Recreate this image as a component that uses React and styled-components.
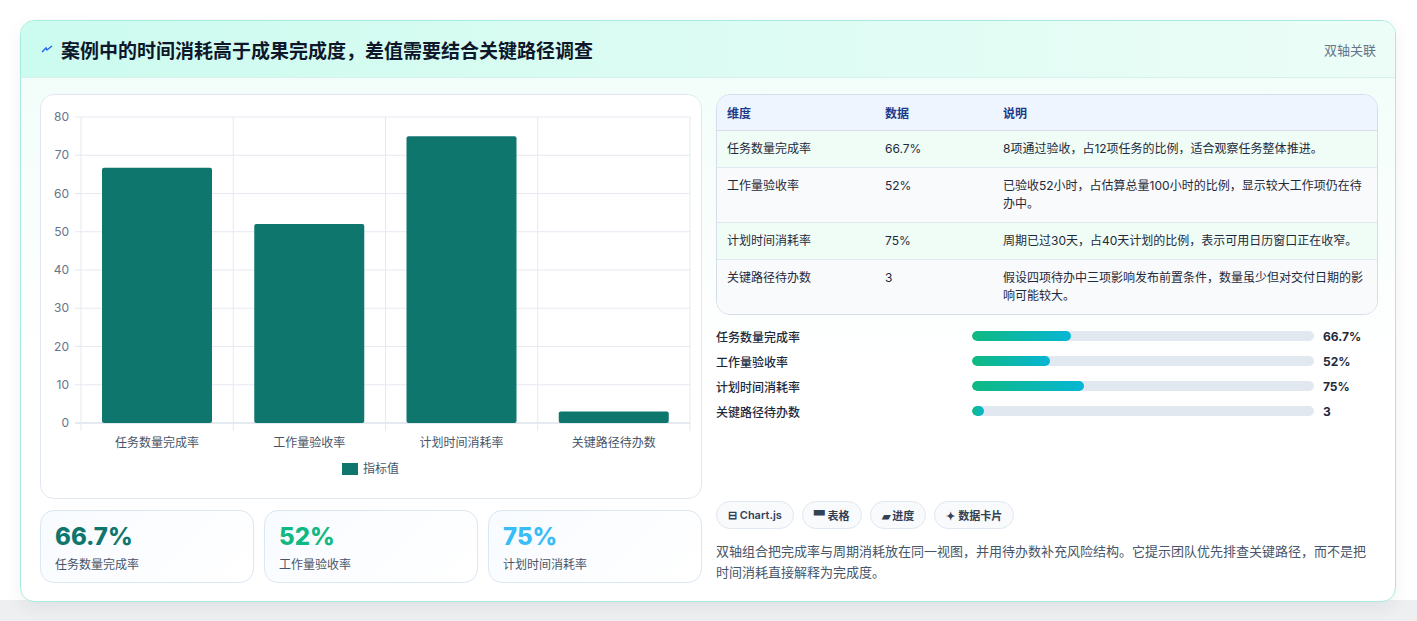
import React from 'react';
import styled, { createGlobalStyle } from 'styled-components';

const Global = createGlobalStyle`
  body { margin: 0; background: #f3f4f6; font-family: Inter, "Noto Sans CJK SC", sans-serif; }
`;

const Page = styled.div`
  padding: 20px 21px 21px 20px;
  height: 621px;
  box-sizing: border-box;
  background: linear-gradient(#fff 0, #fff 600px, #eeeff1 600px);
`;

const Card = styled.div`
  border: 1px solid #a7eadf;
  border-radius: 14px;
  background: linear-gradient(180deg, #f0fdf8 0%, #ffffff 60%);
  box-shadow: 0 6px 18px rgba(15, 23, 42, 0.06);
  overflow: hidden;
`;

const Header = styled.div`
  height: 56px;
  display: flex;
  align-items: center;
  justify-content: space-between;
  padding: 0 19px 0 20px;
  background: linear-gradient(90deg, #ccfbef 0%, #ecfdf7 100%);
  border-bottom: 1px solid #d5f3ec;
`;

const Title = styled.h1`
  margin: 0;
  font-size: 19px;
  font-weight: 700;
  color: #0f172a;
  display: flex;
  align-items: center;
  gap: 8px;
`;

const Tag = styled.span`
  font-size: 13px;
  color: #64748b;
`;

const Body = styled.div`
  display: grid;
  grid-template-columns: 662px 662px;
  gap: 14px;
  padding: 16px 18px 18px 19px;
`;

const Col = styled.div`
  display: flex;
  flex-direction: column;
`;

const ChartCard = styled.div`
  height: 403px;
  border: 1px solid #e2e8f0;
  border-radius: 14px;
  background: #fff;
`;

const Kpis = styled.div`
  display: grid;
  grid-template-columns: repeat(3, 1fr);
  gap: 10px;
  margin-top: 11px;
`;

const Kpi = styled.div`
  height: 73px;
  box-sizing: border-box;
  border: 1px solid #dbe7f3;
  border-radius: 14px;
  background: linear-gradient(135deg, #f8fbff, #ffffff);
  padding: 11px 14px;
`;

const KpiValue = styled.div`
  font-size: 24px;
  font-weight: 800;
  color: ${p => p.$color};
  line-height: 30px;
`;

const KpiLabel = styled.div`
  font-size: 12px;
  color: #475569;
  margin-top: 3px;
`;

const Table = styled.table`
  width: 100%;
  border-collapse: separate;
  border-spacing: 0;
  border: 1px solid #d4dde9;
  border-radius: 14px;
  overflow: hidden;
  font-size: 12px;
  color: #1e293b;
`;

const Th = styled.th`
  text-align: left;
  font-weight: 600;
  color: #1e3a8a;
  background: #eef5ff;
  padding: 9px 10px;
  height: 15px;
  border-bottom: 1px solid #d4dde9;
`;

const Td = styled.td`
  padding: 9px 10px;
  vertical-align: top;
  line-height: 18px;
  border-bottom: ${p => (p.$last ? 'none' : '1px solid #e2e8f0')};
  background: ${p => (p.$alt ? '#f0fdf6' : '#f8fafc')};
`;

const Bars = styled.div`
  display: flex;
  flex-direction: column;
  gap: 7px;
  margin-top: 12px;
`;

const BarRow = styled.div`
  display: grid;
  grid-template-columns: 247px 342px 1fr;
  align-items: center;
  gap: 9px;
  font-size: 12px;
  height: 18px;
`;

const BarLabel = styled.span`
  color: #1e293b;
  font-weight: 500;
`;

const Track = styled.div`
  height: 10px;
  border-radius: 5px;
  background: #e2e8f0;
  overflow: hidden;
`;

const Fill = styled.div`
  height: 100%;
  border-radius: 5px;
  background: linear-gradient(90deg, #10b981, #06b6d4);
`;

const BarValue = styled.span`
  font-weight: 700;
  color: #1e293b;
`;

const Chips = styled.div`
  display: flex;
  gap: 8px;
  margin-top: auto;
`;

const Chip = styled.span`
  height: 28px;
  box-sizing: border-box;
  padding: 0 11px;
  display: inline-flex;
  align-items: center;
  gap: 4px;
  border: 1px solid #e2e8f0;
  border-radius: 14px;
  background: #f8fafc;
  font-size: 11px;
  font-weight: 600;
  color: #334155;
`;

const Note = styled.p`
  margin: 12px 0 0;
  font-size: 13px;
  line-height: 21px;
  color: #475569;
`;

const cats = [
  ['任务数量完成率', 66.7],
  ['工作量验收率', 52],
  ['计划时间消耗率', 75],
  ['关键路径待办数', 3],
];

function Chart() {
  const x0 = 40, x1 = 649, y0 = 328, yTop = 22;
  const k = (y0 - yTop) / 80;
  const cw = (x1 - x0) / 4;
  return (
    <svg width="662" height="403" style={{ display: 'block' }}>
      {[0, 10, 20, 30, 40, 50, 60, 70, 80].map(v => (
        <g key={v}>
          <line x1={x0 - 6} x2={x1} y1={y0 - v * k} y2={y0 - v * k} stroke={v === 0 ? '#cbd5e1' : '#e5e9f0'} />
          <text x={28} y={y0 - v * k + 4} textAnchor="end" fontSize="12" fill="#64748b" fontFamily="Inter">{v}</text>
        </g>
      ))}
      {[0, 1, 2, 3, 4].map(i => (
        <line key={i} x1={x0 + i * cw} x2={x0 + i * cw} y1={yTop} y2={y0 + 8} stroke="#e5e9f0" />
      ))}
      {cats.map(([n, v], i) => (
        <g key={n}>
          <rect x={x0 + i * cw + 21} y={y0 - v * k} width={110} height={v * k} rx="2" fill="#0f766e" />
          <text x={x0 + i * cw + cw / 2} y={352} textAnchor="middle" fontSize="12" fill="#475569" fontFamily="Noto Sans CJK SC">{n}</text>
        </g>
      ))}
      <rect x="301" y="368" width="16" height="12" fill="#0f766e" />
      <text x="322" y="378" fontSize="12" fill="#475569" fontFamily="Noto Sans CJK SC">指标值</text>
    </svg>
  );
}

const rows = [
  ['任务数量完成率', '66.7%', '8项通过验收，占12项任务的比例，适合观察任务整体推进。'],
  ['工作量验收率', '52%', '已验收52小时，占估算总量100小时的比例，显示较大工作项仍在待办中。'],
  ['计划时间消耗率', '75%', '周期已过30天，占40天计划的比例，表示可用日历窗口正在收窄。'],
  ['关键路径待办数', '3', '假设四项待办中三项影响发布前置条件，数量虽少但对交付日期的影响可能较大。'],
];

const bars = [
  ['任务数量完成率', 29, '66.7%'],
  ['工作量验收率', 22.8, '52%'],
  ['计划时间消耗率', 32.8, '75%'],
  ['关键路径待办数', 3.5, '3'],
];

export default function App() {
  return (
    <Page>
      <Global />
      <Card>
        <Header>
          <Title>
            <svg width="12" height="12" viewBox="0 0 12 12"><path d="M1 9 L5 5 L6 7 L11 3" stroke="#2563eb" strokeWidth="1.4" fill="none" /></svg>
            案例中的时间消耗高于成果完成度，差值需要结合关键路径调查
          </Title>
          <Tag>双轴关联</Tag>
        </Header>
        <Body>
          <Col>
            <ChartCard><Chart /></ChartCard>
            <Kpis>
              <Kpi><KpiValue $color="#0f766e">66.7%</KpiValue><KpiLabel>任务数量完成率</KpiLabel></Kpi>
              <Kpi><KpiValue $color="#10b981">52%</KpiValue><KpiLabel>工作量验收率</KpiLabel></Kpi>
              <Kpi><KpiValue $color="#38bdf8">75%</KpiValue><KpiLabel>计划时间消耗率</KpiLabel></Kpi>
            </Kpis>
          </Col>
          <Col>
            <Table>
              <colgroup><col style={{ width: 158 }} /><col style={{ width: 118 }} /><col /></colgroup>
              <thead><tr><Th>维度</Th><Th>数据</Th><Th>说明</Th></tr></thead>
              <tbody>
                {rows.map((r, i) => (
                  <tr key={r[0]}>
                    {r.map((c, j) => <Td key={j} $alt={i % 2 === 0} $last={i === rows.length - 1}>{c}</Td>)}
                  </tr>
                ))}
              </tbody>
            </Table>
            <Bars>
              {bars.map(([n, w, v]) => (
                <BarRow key={n}>
                  <BarLabel>{n}</BarLabel>
                  <Track><Fill style={{ width: `${w}%` }} /></Track>
                  <BarValue>{v}</BarValue>
                </BarRow>
              ))}
            </Bars>
            <Chips>
              <Chip>⊟ Chart.js</Chip>
              <Chip>▀ 表格</Chip>
              <Chip>▰ 进度</Chip>
              <Chip>✦ 数据卡片</Chip>
            </Chips>
            <Note>双轴组合把完成率与周期消耗放在同一视图，并用待办数补充风险结构。它提示团队优先排查关键路径，而不是把时间消耗直接解释为完成度。</Note>
          </Col>
        </Body>
      </Card>
    </Page>
  );
}
